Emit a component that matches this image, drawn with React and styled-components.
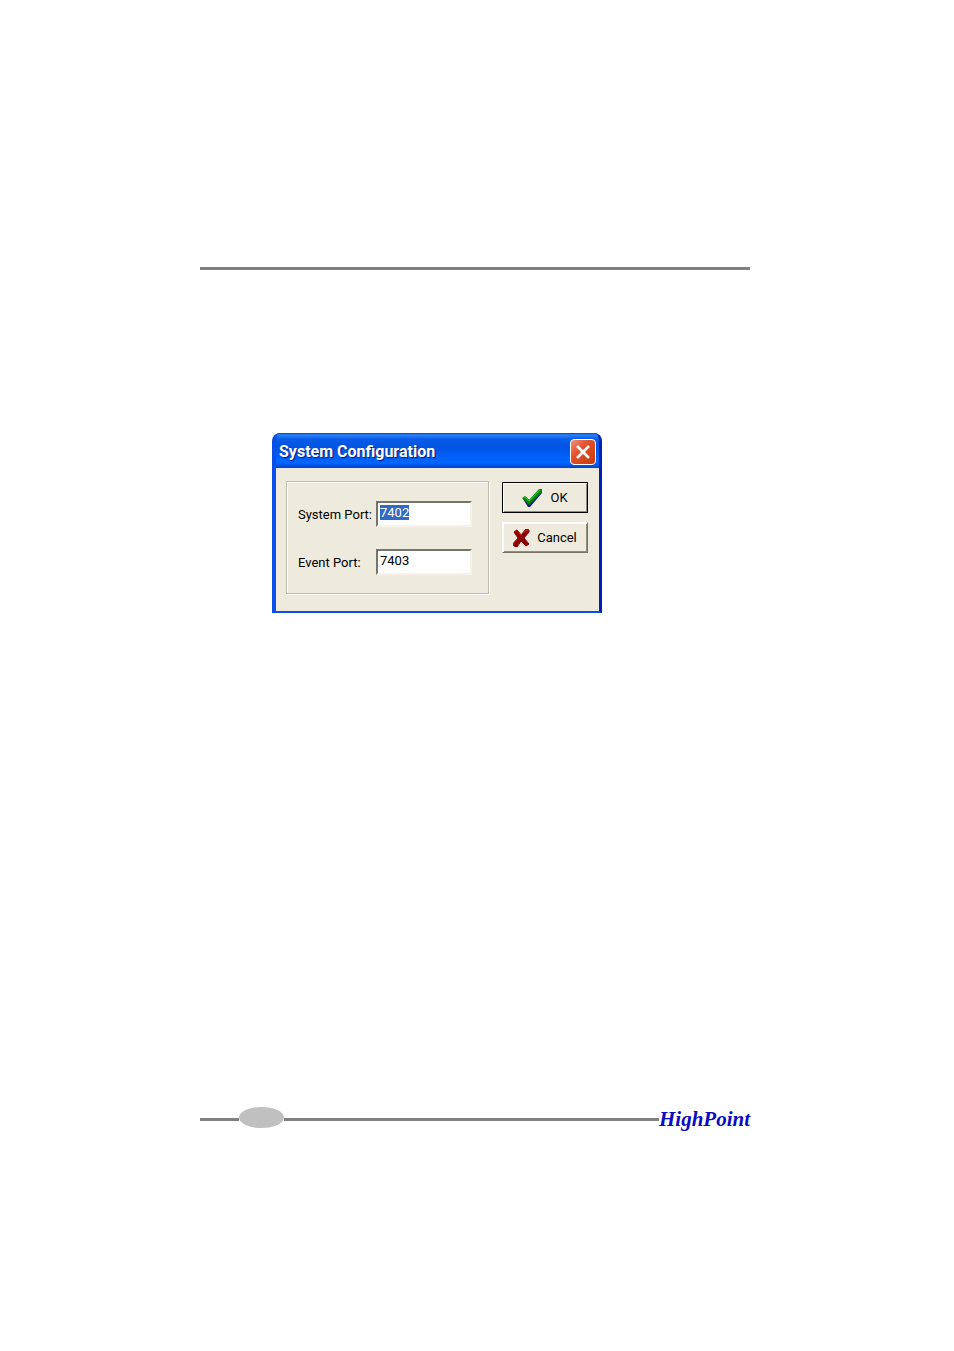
import React, { useEffect, useRef, useState } from 'react'
import styled, { createGlobalStyle } from "styled-components";

function App() {
    const [systemPort, setSystemPort] = useState("7402");
    const [eventPort, setEventPort] = useState("7403");
    const systemRef = useRef(null);

    useEffect(() => {
        systemRef.current.focus();
        systemRef.current.select();
    }, []);

    const handleSubmit = (e) => {
        e.preventDefault();
    }

  return (
    <Page>
        <GlobalStyle />
        <Rule />
        <Dialog onSubmit={handleSubmit} aria-labelledby="dialog-title">
            <TitleBar>
                <Title id="dialog-title">System Configuration</Title>
                <CloseButton type="button" aria-label="Close">
                    <svg width="16" height="16" viewBox="0 0 16 16">
                        <path d="M2 2L14 14M14 2L2 14" stroke="#fff" strokeWidth="2.6" />
                    </svg>
                </CloseButton>
            </TitleBar>
            <Body>
                <Group>
                    <Label htmlFor="system-port">System Port:</Label>
                    <Input
                        id="system-port"
                        ref={systemRef}
                        value={systemPort}
                        onChange={(e) => setSystemPort(e.target.value)}
                    />
                    <Label htmlFor="event-port">Event Port:</Label>
                    <Input
                        id="event-port"
                        value={eventPort}
                        onChange={(e) => setEventPort(e.target.value)}
                    />
                </Group>
                <Actions>
                    <Button type="submit" $primary>
                        <svg width="21" height="20" viewBox="0 0 21 20">
                            <path d="M1 11L4 9L8 13L18 2L20 2L20 5L8 19L6 19Z" fill="#102080" />
                            <path d="M0 10L3 8L7 12L17 1L20 1L20 4L7 17Z" fill="#087f08" />
                            <path d="M1 10L3 9L7 13L18 2" fill="none" stroke="#18c818" strokeWidth="1.2" />
                        </svg>
                        OK
                    </Button>
                    <Button type="button">
                        <svg width="17" height="18" viewBox="0 0 17 18">
                            <path
                                d="M1 3L4 1L8 6L13 0L16 1L16 3L11 9L16 15L13 17L8 12L4 18L1 17L0 15L5 9Z"
                                fill="#8c0000"
                                stroke="#8c0000"
                            />
                            <path d="M1 3L4 1L8 6L13 1L15 2M0 15L5 9" fill="none" stroke="#d81010" />
                        </svg>
                        Cancel
                    </Button>
                </Actions>
            </Body>
        </Dialog>
        <Footer>
            <FooterLine $short />
            <PageMark />
            <FooterLine />
            <Brand>HighPoint</Brand>
        </Footer>
    </Page>
  )
}

export default App

const GlobalStyle = createGlobalStyle`
    * {
        box-sizing: border-box;
    }

    body {
        margin: 0;
        background-color: #fff;
        font-family: Roboto, "Liberation Sans", sans-serif;
        font-size: 13px;
        color: #000;
    }
`;

const Page = styled.main`
    min-height: 100vh;
    padding: 267px 204px 220px 200px;
    display: flex;
    flex-direction: column;
`;

const Rule = styled.hr`
    width: 100%;
    height: 3px;
    margin: 0;
    border: none;
    background-color: #808080;
`;

const Dialog = styled.form`
    width: 330px;
    margin: 163px 0 0 72px;
    border-style: solid;
    border-width: 0 3px 2px 4px;
    border-color: #0a2fd0 #001fb4 #0a50e8 #0a50e8;
    border-radius: 8px 8px 0 0;
    background-color: #0054e3;
    overflow: hidden;
`;

const TitleBar = styled.div`
    height: 35px;
    margin: 0 -3px 0 -4px;
    padding: 2px 6px 0 7px;
    display: flex;
    align-items: center;
    justify-content: space-between;
    background: linear-gradient(#0842c0 0, #2a84f8 2px, #0a5ce8 6px, #0054e3 14px, #0060fa 24px, #0066ff 30px, #003fc8 35px);
`;

const Title = styled.h1`
    margin: 0;
    font-family: Roboto, sans-serif;
    font-size: 16px;
    font-weight: 700;
    line-height: 24px;
    color: #fff;
    text-shadow: 1px 1px 1px #0a1883;
`;

const CloseButton = styled.button`
    width: 26px;
    height: 26px;
    padding: 0;
    display: flex;
    align-items: center;
    justify-content: center;
    border: 1px solid #fff;
    border-radius: 4px;
    background: linear-gradient(135deg, #f09078 0%, #e2512c 40%, #cc3804 100%);
`;

const Body = styled.div`
    padding: 13px 11px 17px 10px;
    display: flex;
    align-items: flex-start;
    justify-content: space-between;
    background-color: #eeeade;
`;

const Group = styled.div`
    width: 203px;
    height: 113px;
    padding: 19px 16px 0 11px;
    display: grid;
    grid-template-columns: 1fr 96px;
    grid-auto-rows: 26px;
    row-gap: 22px;
    border: 1px solid #bfbcae;
    box-shadow: 1px 1px 0 #fff, inset 1px 1px 0 #fff;
`;

const Label = styled.label`
    padding-top: 6px;
    line-height: 16px;
    white-space: nowrap;
`;

const Input = styled.input`
    width: 96px;
    height: 26px;
    padding: 1px 2px 5px;
    border: 2px solid;
    border-color: #77756a #f8f3ea #f8f3ea #77756a;
    background-color: #fff;
    font: inherit;
    line-height: 16px;
    color: #000;
    outline: none;

    &::selection {
        background-color: #316ac5;
        color: #fff;
    }
`;

const Actions = styled.div`
    width: 86px;
    padding-top: 1px;
    display: flex;
    flex-direction: column;
    gap: 9px;
`;

const Button = styled.button`
    height: 31px;
    padding: 0;
    display: flex;
    align-items: center;
    justify-content: center;
    gap: 7px;
    border: 1px solid;
    border-color: ${({ $primary }) => ($primary ? "#000" : "#fff #77756a #77756a #fff")};
    box-shadow: inset 1px 1px 0 #fff, inset -1px -1px 0 #8f8c7e;
    background-color: #eeeade;
    font: inherit;
    color: #000;
`;

const Footer = styled.footer`
    margin-top: auto;
    height: 24px;
    display: flex;
    align-items: center;
`;

const FooterLine = styled.div`
    height: 3px;
    flex: ${({ $short }) => ($short ? "0 0 39px" : "1")};
    background-color: #808080;
`;

const PageMark = styled.div`
    width: 45px;
    height: 21px;
    align-self: flex-start;
    border-radius: 50%;
    background-color: #c0c0c0;
`;

const Brand = styled.div`
    font-family: "Liberation Serif", serif;
    font-size: 21px;
    font-style: italic;
    font-weight: 700;
    line-height: 24px;
    color: #0a0ac4;
`;
